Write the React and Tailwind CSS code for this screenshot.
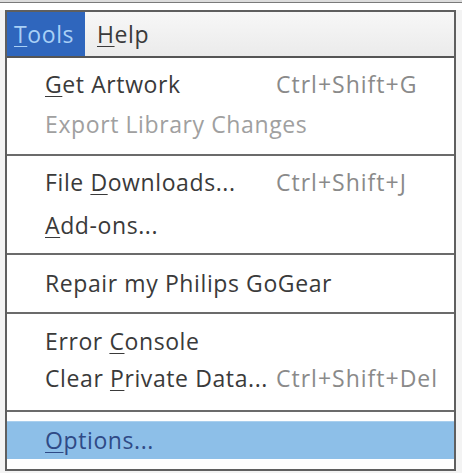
import React from "react";

// ── Menu data ────────────────────────────────────────────────────────────────
const U = ({ children }) => (
  <span className="underline decoration-1 underline-offset-[3px]">{children}</span>
);

const Row = ({ children, shortcut, h, disabled }) => (
  <div className={`flex items-center ${h}`}>
    <div className={`pl-[38px] w-[269px] whitespace-nowrap ${disabled ? "text-[#a0a0a0]" : "text-[#3a3a3a]"}`}>
      {children}
    </div>
    {shortcut && <div className="text-[#8a8a8a] whitespace-nowrap tracking-[1px]">{shortcut}</div>}
  </div>
);

const Sep = () => <div className="h-[2px] bg-[#6b6b6b]" />;

export default function App() {
  return (
    <div
      className="w-[462px] h-[473px] bg-[#f3f3f3] overflow-hidden text-[23px] leading-none font-medium tracking-[0.6px]"
      style={{ fontFamily: '"Open Sans", "Noto Sans", sans-serif' }}
    >
      {/* top strip */}
      <div className="h-[2px] bg-[#dcdcdc]" />
      <div className="h-[1px] bg-[#7a7a7a]" />
      <div className="h-[7px] bg-white" />

      <div className="ml-[5px] w-[451px] border-l-2 border-r-2 border-t-2 border-[#5f5f5f]">
        {/* menubar */}
        <div className="h-[44px] flex items-stretch bg-gradient-to-b from-[#f7f7f7] to-[#ebebeb]">
          <div className="w-[78px] bg-[#2f66bd] text-[#a9d0f6] flex items-center pl-[7px]">
            <U>T</U>ools
          </div>
          <div className="flex items-center pl-[12px] text-[#3a3a3a]">
            <U>H</U>elp
          </div>
        </div>
        <div className="h-[2px] bg-[#555555]" />

        {/* dropdown body */}
        <div className="bg-white">
          <div className="pt-[6px] pb-[10px]">
            <Row h="h-[40px]" shortcut="Ctrl+Shift+G"><U>G</U>et Artwork</Row>
            <Row h="h-[40px]" disabled>Export Library Changes</Row>
          </div>
          <Sep />
          <div className="pt-[5px] pb-[6px]">
            <Row h="h-[43px]" shortcut="Ctrl+Shift+J">File <U>D</U>ownloads...</Row>
            <Row h="h-[43px]"><U>A</U>dd-ons...</Row>
          </div>
          <Sep />
          <div>
            <Row h="h-[57px]">Repair my Philips GoGear</Row>
          </div>
          <Sep />
          <div className="pt-[8px] pb-[14px]">
            <Row h="h-[38px]">Error <U>C</U>onsole</Row>
            <Row h="h-[36px]" shortcut="Ctrl+Shift+Del">Clear <U>P</U>rivate Data...</Row>
          </div>
          <Sep />
          <div className="pt-[9px] pb-[10px]">
            <div className="h-[38px] flex items-center bg-[#8dbfe8] border-t border-[#a9cfee]">
              <div className="pl-[38px] text-[#2f4a86]"><U>O</U>ptions...</div>
            </div>
          </div>
        </div>
      </div>
      <div className="ml-[5px] w-[451px] h-[2px] bg-[#5f5f5f]" />
    </div>
  );
}
